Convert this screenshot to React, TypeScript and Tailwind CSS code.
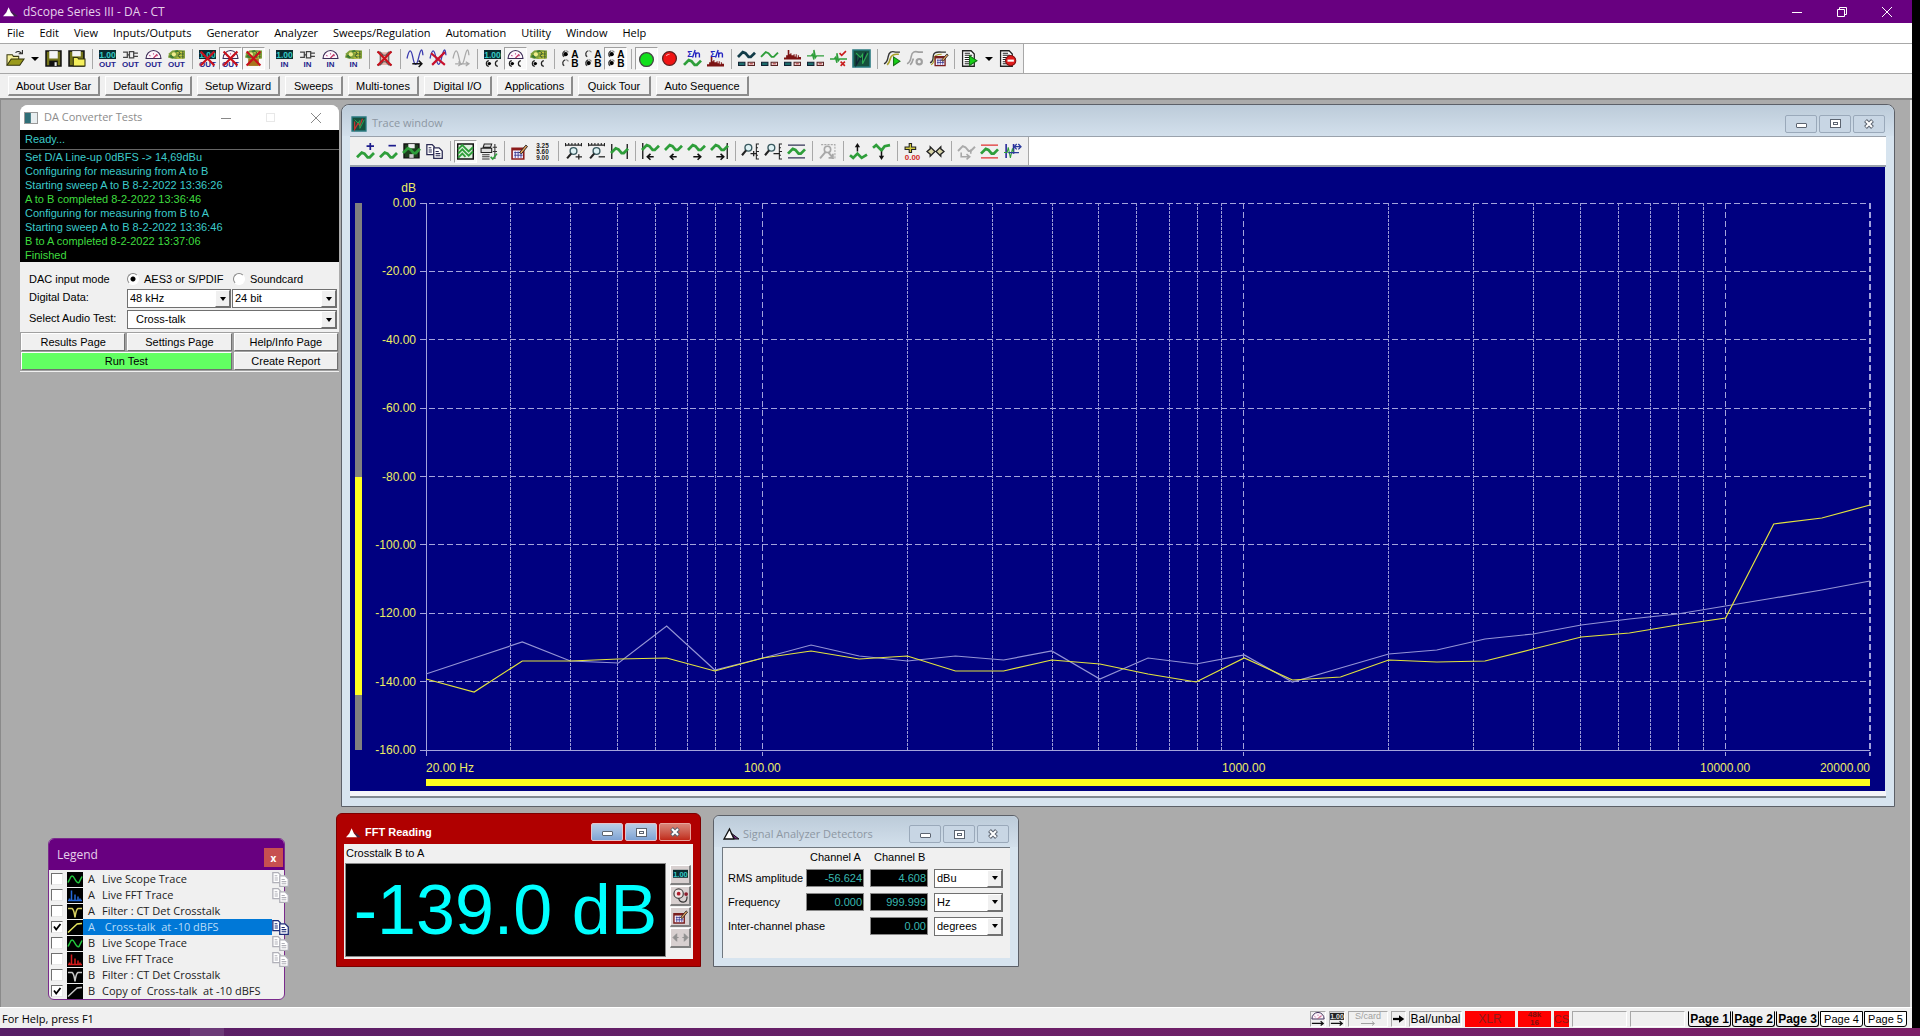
import type { ReactNode } from "react";
import clsx from "clsx";

/* ---------- icon parts, all on a 16 x 16 grid ---------- */

const GREEN = "#2e9e3a";

const Icon = ({ children, className = "size-[17px]" }: { children: ReactNode; className?: string }) => (
  <svg viewBox="0 0 16 16" className={clsx("shrink-0 overflow-visible", className)} fill="none" aria-hidden="true">
    {children}
  </svg>
);

const T = ({ x, y, s, fill, children }: { x: number; y: number; s: number; fill: string; children: string }) => (
  <text x={x} y={y} fontSize={s} fill={fill} fontWeight="bold" textAnchor="middle" fontFamily="Liberation Sans, sans-serif">
    {children}
  </text>
);

const Display = () => (
  <>
    <rect x="0" y="0" width="16" height="8.5" fill="#0a2a2e" />
    <T x={8} y={7.2} s={8} fill="#35c9c4">1.00</T>
  </>
);
const Plug = () => (
  <path d="M1 2h4v5H1M5 4.5h2M7 1.5h4v6H7zM11 3h4M11 6h4" stroke="#444" strokeWidth="1.2" />
);
const Dial = () => (
  <>
    <path d="M1 8a7 7.5 0 0 1 14 0z" fill="#fdf6fb" stroke="#3a2a55" strokeWidth="1.1" />
    <path d="M4 5l1.2.8M8 3v1.2M12 5l-1.2.8" stroke="#c0478c" />
    <path d="M8 7.5L11.5 4" stroke="#c0305c" strokeWidth="1.1" />
  </>
);
const Gears = () => (
  <>
    <path d="M0 7l1-4 3-2.500L9 0l7 .500V8l-8 .500-5-.500z" fill="#7fa03a" />
    <path d="M6 1l3-1 1 2-2 1zM1 6l2-2 3 3-2 1z" fill="#3c7a34" />
    <circle cx="5.500" cy="4" r="2" fill="#f0ec8c" />
    <path d="M8 2.500h7M9 5h6M8 7.500h7" stroke="#e3d442" strokeWidth=".800" />
    <path d="M10 1.500l1.500 2-2 1.500 2 2.500M14 1v7" stroke="#2d4a2a" strokeWidth=".900" />
  </>
);
const Out = () => <T x={8} y={15.800} s={7.500} fill="#24248c">OUT</T>;
const In = () => <T x={8} y={15.800} s={7.500} fill="#24248c">IN</T>;
const RedX = () => <path d="M1.5 1.5l13 13M14.5 1.5l-13 13" stroke="#c8101c" strokeWidth="2" />;
const Radios = () => (
  <>
    <path d="M4.500 10a2.800 2.800 0 0 0 0 5.500M13 10a2.800 2.800 0 0 0 0 5.500" stroke="#222" strokeWidth="1.200" />
    <circle cx="5" cy="12.800" r="1.600" fill="#000" />
  </>
);
const AB = ({ a, b }: { a?: boolean; b?: boolean }) => (
  <Icon>
    <path d="M4 .700a3.200 3.200 0 0 0-1 5.700M4 9.200a3.200 3.200 0 0 0-1 5.700" stroke="#333" strokeWidth="1.200" />
    <path d="M4.500.700a3 3 0 0 1 2.500 1.500M4.500 9.200a3 3 0 0 1 2.500 1.500" stroke="#777" />
    {a && <circle cx="4.400" cy="3.900" r="2" fill="#000" />}
    {b && <circle cx="4.400" cy="12.300" r="2" fill="#000" />}
    <T x={13} y={7.300} s={9.500} fill="#000">A</T>
    <T x={13} y={15.800} s={9.500} fill="#000">B</T>
  </Icon>
);
const Wave = ({ y = 0, c = GREEN, w = 2.6 }: { y?: number; c?: string; w?: number }) => (
  <path d="M0 9.500L4.500 5L7 6L10 9.500L12 9.500L16 5.500" transform={`translate(0 ${y})`} stroke={c} strokeWidth={w} />
);
const Boxes = () => (
  <>
    <path d="M.5 11.5h6v3h-6z" fill="#1b6b6b" stroke="#123" />
    <path d="M9.5 11.5h6v3h-6z" fill="#f3dede" stroke="#522" />
    <path d="M11 13h3" stroke="#a33" />
  </>
);
const Spikes = ({ c = "#7c1414", y = 0 }: { c?: string; y?: number }) => (
  <path d="M0 9h16V6.500h-2V5h-1v2h-1V4h-1v2h-1V4H9v1H8V5H7V3H6v1H5V0H3.500v5H2v2H0z" transform={`translate(0 ${y})`} fill={c} />
);
const Blip = () => <path d="M0 5.500h4l1-1.500 1.500 5V0l1.500 7 1-1.500h7" stroke={GREEN} strokeWidth="1.3" />;
const Sigma = () => (
  <>
    <T x={5.5} y={6.5} s={8} fill="#2424c0">Σ</T>
    <path d="M10.500 0L8 7M11 2v5M11 4q3-2.500 3.500 0v3" stroke="#2424c0" strokeWidth="1.300" />
  </>
);
const Sheet = () => (
  <>
    <path d="M1.500.7h8l3 3v11.600h-11z" fill="#fff" stroke="#222" strokeWidth="1.2" />
    <path d="M3.500 3h5M3.500 5h7M3.500 7h4M3.500 9h4M3.500 11h4M3.500 13h6" stroke="#222" />
  </>
);
const Grid = ({ c = "#7a1f1f" }: { c?: string }) => (
  <>
    <path d="M1 5h11v10H1z" fill="#f6f0ff" stroke={c} strokeWidth="1.5" />
    <path d="M1 6h11" stroke={c} strokeWidth="2" />
    <path d="M3 9h8M3 11.500h8M4 8v6M6.700 8v6M9.400 8v6" stroke="#33338c" strokeWidth=".8" />
    <path d="M8 9l6-7 1.500 1.300L10 10z" fill="#e5a05c" stroke="#222" strokeWidth=".9" />
  </>
);
const Copy = ({ c = "#2a2a52" }: { c?: string }) => (
  <Icon>
    <path d="M.8 1.500h5l2 2v7.500h-7z" fill="#fff" stroke={c} strokeWidth="1.2" />
    <path d="M7.300 4.500h5l3 3v7h-8z" fill="#fff" stroke={c} strokeWidth="1.2" />
    <path d="M2.500 4.500h2.500M2.500 6.500h3M2.500 8.500h3M9 8h3M9 10h4.500M9 12h4.500" stroke={c} />
  </Icon>
);
const Lens = ({ sign }: { sign: "+" | "-" }) => (
  <>
    <circle cx="8" cy="7.500" r="3.200" fill="#dff2f4" stroke="#3a5a60" strokeWidth="1.300" />
    <path d="M5.800 10L2 14.500" stroke="#222" strokeWidth="2" />
    <path d={sign === "+" ? "M10 13h6M13 10.500v5" : "M10 13h6"} stroke="#222" strokeWidth="1.200" />
  </>
);
const Arrow = ({ left }: { left?: boolean }) =>
  left ? (
    <path d="M11 13H5M8 10.200L5 13l3 2.800" stroke="#111" strokeWidth="1.500" />
  ) : (
    <path d="M5 13h7M9 10.200l3 2.800-3 2.800" stroke="#111" strokeWidth="1.500" />
  );
const Scope = ({ c = "#d03030" }: { c?: string }) => (
  <>
    <path d="M0 0h16v16H0z" fill="#16503c" />
    <path d="M0 0h16v16H0z" stroke="#2a7a80" strokeWidth="1.500" />
    <path d="M3 5v9l4-7 2 3 3-8" stroke={c} strokeWidth="1.300" />
    <path d="M3 3l4 4 2-3v9l5-10" stroke="#2fae55" />
  </>
);
const Sail = ({ dark }: { dark?: boolean }) => (
  <Icon className={dark ? "size-4" : "size-[15px]"}>
    <path d={dark ? "M1 13L6.500 3L11 13z" : "M0 13L3.500 9L6 3.500L8.500 9L12 13z"} fill="#fff" stroke={dark ? "#111" : "none"} strokeWidth="1.300" />
    <path d="M8 7l8 6h-4z" fill={dark ? "#7c2a8c" : "#3c2a48"} stroke={dark ? "#111" : "none"} />
  </Icon>
);

/* ---------- toolbars ---------- */

type Item = { label: string; icon: ReactNode; pressed?: boolean } | "sep" | "arrow";

const mainTools: Item[] = [
  {
    label: "Open",
    icon: (
      <Icon>
        <path d="M0 14V4.500h5l1 1.500h5v3" fill="#f5ef9c" stroke="#3c3c12" />
        <path d="M0 14.300L4 8.500h12L12 14.300z" fill="#9a9a1c" stroke="#33330c" />
        <path d="M8 2.500q3-2.500 5.500.5M14.500 0v3.500H11" stroke="#222" />
      </Icon>
    ),
  },
  "arrow",
  {
    label: "Save",
    icon: (
      <Icon>
        <path d="M1 1h14v14H1z" fill="#74741a" stroke="#111" strokeWidth="1.500" />
        <path d="M4 1h8v7H4z" fill="#f4f4f4" />
        <path d="M4 10h8v5H4z" fill="#111" />
        <path d="M9 11.500h2V15H9z" fill="#eee" />
      </Icon>
    ),
  },
  {
    label: "Save all",
    icon: (
      <Icon>
        <path d="M1 1h14v14H1z" fill="#74741a" stroke="#111" strokeWidth="1.500" />
        <path d="M4 1h8v5H4z" fill="#f4f4f4" />
        <path d="M5 15V7h4l1 1.500h6V15z" fill="#f5ef5c" stroke="#33330c" />
      </Icon>
    ),
  },
  "sep",
  { label: "Digital outputs", icon: <Icon><Display /><Out /></Icon> },
  { label: "Analogue outputs", icon: <Icon><Plug /><Out /></Icon> },
  { label: "Monitor outputs", icon: <Icon><Dial /><Out /></Icon> },
  { label: "Sound outputs", icon: <Icon><Gears /><Out /></Icon> },
  "sep",
  { label: "Mute digital", icon: <Icon><Display /><Out /><RedX /></Icon> },
  { label: "Mute analogue", pressed: true, icon: <Icon><Dial /><Out /><RedX /></Icon> },
  { label: "Mute sound", pressed: true, icon: <Icon><Gears /><path d="M3 8h10v7H3z" fill="#a8741c" /><RedX /></Icon> },
  "sep",
  { label: "Digital inputs", icon: <Icon><Display /><In /></Icon> },
  { label: "Analogue inputs", icon: <Icon><Plug /><In /></Icon> },
  { label: "Monitor inputs", icon: <Icon><Dial /><In /></Icon> },
  { label: "Sound inputs", icon: <Icon><Gears /><In /></Icon> },
  "sep",
  {
    label: "Disconnect",
    icon: (
      <Icon>
        <path d="M1 2h3l3 3h2l3-3h3M1 14h3l3-3h2l3 3h3M4 5h8v6H4z" fill="#e8b0a8" stroke="#555" />
        <RedX />
      </Icon>
    ),
  },
  "sep",
  {
    label: "Start generator",
    icon: <Icon><path d="M0 8q3-14 5.500-1t5.500 0T15 5" stroke="#3a3aae" strokeWidth="1.200" /><path d="M5 13h9M11 10l3 3-3 3" stroke="#111" strokeWidth="1.400" /></Icon>,
  },
  {
    label: "Stop generator",
    icon: <Icon><path d="M0 8q3-14 5.500-1t5.500 0T15 5" stroke="#3a3aae" strokeWidth="1.200" /><path d="M1 3l13 11M14 2L2 14" stroke="#c8102c" strokeWidth="2" /></Icon>,
  },
  {
    label: "Step generator",
    icon: <Icon><path d="M0 8q3-14 5.500-1t5.500 0T15 5M2 13h5M5 11l3 2-3 2M9 13h5M12 11l3 2-3 2" stroke="#a8a8a8" strokeWidth="1.200" /></Icon>,
  },
  "sep",
  { label: "Reading", icon: <Icon><Display /><Radios /></Icon> },
  { label: "Meter", pressed: true, icon: <Icon><Dial /><Radios /></Icon> },
  { label: "Detector", icon: <Icon><Gears /><Radios /></Icon> },
  "sep",
  { label: "Channel A", icon: <AB a /> },
  { label: "Channel B", icon: <AB b /> },
  { label: "Both channels", pressed: true, icon: <AB a b /> },
  "sep",
  { label: "Run", pressed: true, icon: <Icon><circle cx="8" cy="9" r="6.500" fill="#12e01c" stroke="#444" strokeWidth="1.200" /></Icon> },
  { label: "Stop", icon: <Icon><circle cx="8" cy="8" r="6.500" fill="#f01414" stroke="#5a2020" strokeWidth="1.200" /><path d="M5 5.500q1-1.500 3-1.500" stroke="#faa" /></Icon> },
  { label: "Average scope", icon: <Icon><Sigma /><Wave y={4.500} /></Icon> },
  { label: "Average FFT", icon: <Icon><Sigma /><Spikes y={6.500} /></Icon> },
  "sep",
  { label: "Scope buffers", icon: <Icon><Wave y={-3} c="#123c48" /><Boxes /></Icon> },
  { label: "Scope trace", icon: <Icon><Wave y={-3} w={1.800} /><Boxes /></Icon> },
  { label: "FFT trace", icon: <Icon><Spikes /><Boxes /></Icon> },
  { label: "Impulse", icon: <Icon><Blip /><Boxes /></Icon> },
  {
    label: "Impulse check",
    icon: <Icon><g transform="translate(0 3)"><Blip /></g><path d="M9 3l2 2 4-4M10 11l4 4M14 11l-4 4" stroke="#c81c1c" strokeWidth="1.500" /></Icon>,
  },
  { label: "Trace window", icon: <Icon><Scope c="#123" /></Icon> },
  "sep",
  {
    label: "Run sweep",
    icon: <Icon><path d="M0 13q3-1 4-7t7-4h4" stroke="#333" strokeWidth="1.300" /><path d="M3 14q2-2 3-6t6-4h2" stroke="#a8a028" strokeWidth="1.500" /><path d="M9 6.500v8l6-4z" fill="#18d018" stroke="#157015" /></Icon>,
  },
  {
    label: "Sweep options",
    icon: <Icon><path d="M0 13q3-1 4-7t7-4h4M3 14q2-2 3-6" stroke="#a0a0a0" strokeWidth="1.500" /><circle cx="11.500" cy="11" r="2.500" stroke="#a0a0a0" strokeWidth="2" /></Icon>,
  },
  {
    label: "Sweep table",
    icon: <Icon><path d="M0 12q3-1 3-6t8-4h4" stroke="#333" strokeWidth="1.300" /><path d="M1 14q3-2 3-6t7-4" stroke="#a8a028" /><g transform="translate(4 2) scale(.85)"><Grid /></g></Icon>,
  },
  "sep",
  { label: "Run script", icon: <Icon><Sheet /><path d="M8 5.500v9l7-4.500z" fill="#18d018" stroke="#157015" /></Icon> },
  "arrow",
  {
    label: "Stop script",
    icon: <Icon><Sheet /><circle cx="11" cy="10" r="4.800" fill="#e01c1c" stroke="#801010" /><path d="M8 10h6" stroke="#fff" strokeWidth="2" /></Icon>,
  },
];

const traceTools: Item[] = [
  { label: "Add trace", icon: <Icon><Wave y={4} /><path d="M9 3h7M12.500 0v6.500" stroke="#1c1c8c" strokeWidth="1.600" /></Icon> },
  { label: "Remove trace", icon: <Icon><Wave y={4} /><path d="M8 2.500h7" stroke="#1c1c8c" strokeWidth="1.600" /></Icon> },
  {
    label: "Save trace",
    icon: <Icon><path d="M1 1h14v13H1z" fill="#1d3d1d" stroke="#111" strokeWidth="1.400" /><path d="M5 1h6v4H5z" fill="#eee" /><Wave /><path d="M6 10.500h4V14H6z" fill="#ccc" /></Icon>,
  },
  { label: "Copy trace", icon: <Copy /> },
  "sep",
  {
    label: "Graph",
    pressed: true,
    icon: <Icon><path d="M.700 1h14.600v14H.700z" fill="#dff0df" stroke="#111" strokeWidth="1.400" /><path d="M1 6l4-4 3 3 3 3 4-4M1 10l4-4 3 3 3 3 4-4M1 14l4-4 3 3" stroke={GREEN} strokeWidth="1.800" /></Icon>,
  },
  {
    label: "Print",
    icon: <Icon><path d="M4 1h7l-1 3H3zM1 5h10v4H1z" fill="#ddd" stroke="#222" /><path d="M2 11h7M2 13h7M2 15h7M12 4h4M12 8h4M14 1v14" stroke="#333" /><path d="M10 13l2 2 4-5" stroke={GREEN} strokeWidth="1.500" /></Icon>,
  },
  "sep",
  { label: "Edit table", icon: <Icon><Grid c="#8c1c1c" /></Icon> },
  {
    label: "Readout",
    icon: <Icon><T x={8} y={4.800} s={6} fill="#222">3.25</T><T x={8} y={10.200} s={6} fill="#222">5.60</T><T x={8} y={15.600} s={6} fill="#222">9.00</T></Icon>,
  },
  "sep",
  { label: "Zoom in X", icon: <Icon><path d="M0 2h16M.500 0v3M3.500 0v2M6.500 0v2M9.500 0v2M12.500 0v2M15.500 0v3" stroke="#222" /><Lens sign="+" /></Icon> },
  { label: "Zoom out X", icon: <Icon><path d="M0 2h16M.500 0v3M3.500 0v2M6.500 0v2M9.500 0v2M12.500 0v2M15.500 0v3" stroke="#222" /><Lens sign="-" /></Icon> },
  { label: "Fit X", icon: <Icon><path d="M.700 1v14M15.300 1v14" stroke="#222" strokeWidth="1.300" /><Wave /></Icon> },
  "sep",
  { label: "Scroll to start", icon: <Icon><path d="M.700 0v15" stroke="#222" strokeWidth="1.300" /><Wave y={-3} /><Arrow left /></Icon> },
  { label: "Scroll left", icon: <Icon><Wave y={-3} /><Arrow left /></Icon> },
  { label: "Scroll right", icon: <Icon><Wave y={-3} /><Arrow /></Icon> },
  { label: "Scroll to end", icon: <Icon><path d="M15.300 0v15" stroke="#222" strokeWidth="1.300" /><Wave y={-3} /><Arrow /></Icon> },
  "sep",
  { label: "Zoom in Y", icon: <Icon><g transform="translate(-2 -3)"><Lens sign="+" /></g><path d="M13.500 1v14M13 1h3M13 4.500h2M13 8h3M13 11.500h2M13 15h3" stroke="#222" /></Icon> },
  { label: "Zoom out Y", icon: <Icon><g transform="translate(-2 -3)"><Lens sign="-" /></g><path d="M13.500 1v14M13 1h3M13 4.500h2M13 8h3M13 11.500h2M13 15h3" stroke="#222" /></Icon> },
  { label: "Fit Y", icon: <Icon><path d="M0 2h16M0 14h16" stroke="#335" strokeWidth="1.400" /><Wave y={.500} /></Icon> },
  "sep",
  { label: "Undo zoom", icon: <Icon><path d="M2 1.500h13v13h-3" stroke="#aaa" strokeDasharray="2 1" /><circle cx="8" cy="6" r="3" stroke="#a8a8a8" strokeWidth="1.500" /><path d="M6 8.500l-5 6M9 9l4 5M13 10v4H9" stroke="#a8a8a8" strokeWidth="1.800" /></Icon> },
  "sep",
  { label: "Move up", icon: <Icon><path d="M0 11.500L3 14l4-4 4 4 5-3" stroke={GREEN} strokeWidth="2.600" /><path d="M7 8V2" stroke="#111" strokeWidth="1.400" /><path d="M4.500 4L7 0l2.500 4z" fill="#111" /></Icon> },
  { label: "Move down", icon: <Icon><path d="M0 4.500L3 2l5 5 3-4 5-1" stroke={GREEN} strokeWidth="2.600" /><path d="M8 8v6" stroke="#111" strokeWidth="1.400" /><path d="M5.500 12L8 16l2.500-4z" fill="#111" /></Icon> },
  "sep",
  { label: "Cursor", icon: <Icon><path d="M6 0v9.500M.500 5h11" stroke="#222" strokeWidth="3.200" /><path d="M6 1v7.500M1.500 5h9" stroke="#d0c840" strokeWidth="1.300" /><T x={8} y={15.800} s={7.500} fill="#d02828">0.00</T></Icon> },
  { label: "Centre cursor", icon: <Icon><path d="M0 8l3-2.500v-2L7.500 8 3 12.500v-2zM16 8l-3-2.500v-2L8.500 8l4.500 4.500v-2z" fill="#d8d4a8" stroke="#222" strokeWidth="1.200" /></Icon> },
  "sep",
  { label: "Regulate", icon: <Icon><Wave y={-2} c="#aaa" w={1.800} /><path d="M3 9v4h7M8 10.500l3 2.500-3 2.500M12 6v4" stroke="#a8a8a8" strokeWidth="1.500" /></Icon> },
  { label: "Limits", icon: <Icon><path d="M0 2h16M0 14h16" stroke="#e03030" strokeWidth="1.300" /><Wave y={.500} /></Icon> },
  { label: "Markers", icon: <Icon><path d="M2 1v13M9 1v9" stroke="#2a2a9c" strokeWidth="1.500" /><path d="M0 9h3l1-5 2 10 2-9 1 4h5" stroke={GREEN} /><path d="M10 3.500h6M12 1l-2.500 2.500L12 6M13.500 1L16 3.500 13.500 6M4 9h10" stroke="#2a3a9c" strokeWidth="1.200" /></Icon> },
];

const Toolbar = ({ items }: { items: Item[] }) => (
  <div className="flex h-full w-max items-center border-r border-[#a8a8a8] bg-[#f0f0f0] px-1">
    {items.map((item, i) => {
      if (item === "sep")
        return (
          <span key={i} className="flex h-5 w-2 justify-center">
            <span className="w-px bg-[#a8a8a8]" />
          </span>
        );
      if (item === "arrow")
        return (
          <button key={i} aria-label="More" className="flex w-[15px] justify-center">
            <span className="border-x-4 border-t-4 border-x-transparent border-t-black" />
          </button>
        );
      return (
        <button
          key={i}
          aria-label={item.label}
          className={clsx(
            "flex h-[23px] w-[23px] items-center justify-center",
            item.pressed && "border border-t-[#a0a0a0] border-r-white border-b-white border-l-[#a0a0a0] bg-[#f9f9f9]",
          )}
        >
          {item.icon}
        </button>
      );
    })}
  </div>
);

/* ---------- shared controls ---------- */

const Combo = ({ id, label, options, className, pad = "pl-[2px]" }: { id: string; label: string; options: string[]; className?: string; pad?: string }) => (
  <span className={clsx("relative block h-[19px] border border-[#707070] bg-white", className)}>
    <select id={id} aria-label={label} className={clsx("block h-full w-full appearance-none bg-transparent text-[11px] leading-[17px] outline-none", pad)}>
      {options.map((o) => (
        <option key={o}>{o}</option>
      ))}
    </select>
    <span className="pointer-events-none absolute inset-y-0 right-0 flex w-[15px] items-center justify-center border border-t-white border-r-[#707070] border-b-[#707070] border-l-white bg-[#f0f0f0]">
      <span className="border-x-[3px] border-t-4 border-x-transparent border-t-black" />
    </span>
  </span>
);

const WinButtons = ({ active }: { active?: boolean }) => {
  const box = clsx(
    "flex h-[18px] w-8 items-center justify-center rounded-[2px] border",
    active ? "border-[#e4c4cc] bg-linear-to-b from-[#b9cde4] via-[#9dbade] via-50% to-[#7fa3d4]" : "border-[#9aa9ba] bg-[#c8d6e4]",
  );
  return (
    <span className="flex gap-[2px]">
      <button aria-label="Minimize" className={box}>
        <span className="mt-[3px] h-[5px] w-[11px] rounded-[1px] border border-[#5c6470] bg-white" />
      </button>
      <button aria-label="Maximize" className={box}>
        <span className="flex h-[9px] w-[11px] items-center justify-center border border-[#5c6470] bg-white">
          <span className="h-[3px] w-[5px] border border-[#5c6470]" />
        </span>
      </button>
      <button
        aria-label="Close"
        className={clsx("flex h-[18px] w-8 items-center justify-center rounded-[2px] border", active ? "border-[#e8a49c] bg-linear-to-b from-[#d88478] to-[#c02818]" : "border-[#9aa9ba] bg-[#c8d6e4]")}
      >
        <svg viewBox="0 0 12 10" className="h-[10px] w-3" aria-hidden="true">
          <path d="M2.500 1.500l7 7M9.500 1.500l-7 7" stroke="#5c6470" strokeWidth="4" />
          <path d="M3 2l6 6M9 2L3 8" stroke="#fff" strokeWidth="2" />
        </svg>
      </button>
    </span>
  );
};

/* ---------- main bars ---------- */

const menus = ["File", "Edit", "View", "Inputs/Outputs", "Generator", "Analyzer", "Sweeps/Regulation", "Automation", "Utility", "Window", "Help"];

const userButtons = [
  ["About User Bar", "w-[92px]"],
  ["Default Config", "w-[87px]"],
  ["Setup Wizard", "w-[83px]"],
  ["Sweeps", "w-[58px]"],
  ["Multi-tones", "w-[71px]"],
  ["Digital I/O", "w-[68px]"],
  ["Applications", "w-[76px]"],
  ["Quick Tour", "w-[73px]"],
  ["Auto Sequence", "w-[93px]"],
];

const TitleBar = () => (
  <header className="flex h-[23px] items-center bg-[#680080] pl-[3px] text-[#e6d0ea]">
    <Sail />
    <h1 className="ml-[5px] flex-1 font-['Open_Sans',sans-serif] text-[12px]">dScope Series III - DA - CT</h1>
    <div className="flex">
      <button aria-label="Minimize" className="flex w-[45px] justify-center">
        <svg viewBox="0 0 10 10" className="size-[10px]"><path d="M0 5.500h10" stroke="#fff" /></svg>
      </button>
      <button aria-label="Restore" className="flex w-[45px] justify-center">
        <svg viewBox="0 0 10 10" className="size-[10px]" fill="none" stroke="#fff"><path d="M.500 2.500h7v7h-7zM2.500 2.500v-2h7v7h-2" /></svg>
      </button>
      <button aria-label="Close" className="flex w-12 justify-center pr-[2px]">
        <svg viewBox="0 0 10 10" className="size-[10px]"><path d="M0 0l10 10M10 0L0 10" stroke="#fff" /></svg>
      </button>
    </div>
  </header>
);

const MenuBar = () => (
  <nav className="flex h-[21px] items-center gap-[15px] border-b border-[#a8a8a8] bg-white pl-[7px] font-['Open_Sans',sans-serif] text-[11px]">
    {menus.map((m) => (
      <button key={m}>{m}</button>
    ))}
  </nav>
);

const UserBar = () => (
  <div className="flex h-[26px] items-end gap-[5px] border-b-2 border-[#8a8a8a] bg-[#f0f0f0] pb-[2px] pl-2">
    {userButtons.map(([name, width]) => (
      <button key={name} className={clsx("h-5 border border-t-white border-r-2 border-r-[#8c8c8c] border-b-2 border-b-[#8c8c8c] border-l-white text-[11px] leading-4 whitespace-nowrap", width)}>
        {name}
      </button>
    ))}
  </div>
);

/* ---------- DA Converter Tests ---------- */

const log = [
  ["Set D/A Line-up 0dBFS -> 14,69dBu", false],
  ["Configuring for measuring from A to B", false],
  ["Starting sweep A to B 8-2-2022 13:36:26", false],
  ["A to B completed 8-2-2022 13:36:46", true],
  ["Configuring for measuring from B to A", false],
  ["Starting sweep A to B 8-2-2022 13:36:46", false],
  ["B to A completed 8-2-2022 13:37:06", true],
  ["Finished", true],
] as const;

const PushButton = ({ children, className }: { children: string; className?: string }) => (
  <button className={clsx("h-[18px] border border-t-white border-r-[#707070] border-b-[#707070] border-l-white text-[11px] leading-4 outline outline-[#a0a0a0]", className)}>
    {children}
  </button>
);

const ConverterWindow = () => (
  <section className="absolute top-[5px] left-[20px] w-[319px] rounded-t-lg bg-[#f0f0f0]">
    <div className="flex h-[25px] items-center rounded-t-lg bg-white pl-1 text-[#8c8c8c]">
      <span className="h-3 w-[14px] border border-[#999] bg-linear-to-r from-[#2f6f78] from-45% to-[#e8eef0] to-50%" />
      <h2 className="ml-[6px] flex-1 font-['Open_Sans',sans-serif] text-[11px]">DA Converter Tests</h2>
      <button aria-label="Minimize" className="flex w-[45px] justify-center">
        <svg viewBox="0 0 10 10" className="size-[10px]"><path d="M0 5.500h10" stroke="#888" /></svg>
      </button>
      <button aria-label="Maximize" className="flex w-[45px] justify-center">
        <span className="size-[9px] border border-[#e8e8e8]" />
      </button>
      <button aria-label="Close" className="flex w-[46px] justify-center">
        <svg viewBox="0 0 10 10" className="size-[10px]"><path d="M0 0l10 10M10 0L0 10" stroke="#888" /></svg>
      </button>
    </div>
    <div className="bg-black text-[11px] leading-[14px] text-[#3ccaca]">
      <p className="h-5 border-b border-[#666] px-[5px] pt-[2px]">Ready...</p>
      <div className="h-[112px] px-[5px] whitespace-nowrap">
        {log.map(([line, done], i) => (
          <p key={i} className={clsx(done && "text-[#3fdc3f]")}>{line}</p>
        ))}
      </div>
    </div>
    <form className="px-px pt-[9px] pb-[2px] text-[11px]" onSubmit={(e) => e.preventDefault()}>
      <div className="grid grid-cols-[105px_104px_106px] gap-y-[2px] pl-px">
        <span className="pl-[7px] leading-4">DAC input mode</span>
        <label className="flex items-center gap-[5px] leading-4 whitespace-nowrap">
          <input type="radio" name="dac" defaultChecked className="size-3 appearance-none rounded-full border border-[#888] border-r-white border-b-white bg-white bg-[radial-gradient(circle,#000_2px,transparent_3px)]" />
          AES3 or S/PDIF
        </label>
        <label className="flex items-center gap-[5px] pl-[2px] leading-4">
          <input type="radio" name="dac" className="size-3 appearance-none rounded-full border border-[#888] border-r-white border-b-white bg-white" />
          Soundcard
        </label>
        <label htmlFor="rate" className="pl-[7px] leading-4">Digital Data:</label>
        <Combo id="rate" label="Sample rate" options={["48 kHz"]} />
        <Combo id="bits" label="Word length" options={["24 bit"]} className="ml-px" />
        <label htmlFor="test" className="pl-[7px] leading-4 whitespace-nowrap">Select Audio Test:</label>
        <Combo id="test" label="Select Audio Test" options={["Cross-talk"]} className="col-span-2" pad="pl-[8px]" />
      </div>
      <div className="mt-1 grid grid-cols-3 gap-x-[2px] gap-y-px">
        <PushButton>Results Page</PushButton>
        <PushButton>Settings Page</PushButton>
        <PushButton>Help/Info Page</PushButton>
        <PushButton className="col-span-2 bg-[#62ff62]">Run Test</PushButton>
        <PushButton>Create Report</PushButton>
      </div>
    </form>
  </section>
);

/* ---------- Trace window ---------- */

const W = 1444;
const H = 547;

// y positions on the plot, one every tenth of a decade from 20 Hz
const traceA = [476, 489, 458, 458, 456, 455, 468, 455, 448, 456, 453, 468, 468, 457, 461, 471, 479, 455, 477, 474, 457, 459, 458, 446, 434, 430, 422, 415, 321, 315, 302];
const traceB = [471, 455, 439, 458, 460, 423, 467, 455, 442, 453, 458, 453, 457, 448, 476, 455, 461, 452, 479, 465, 451, 447, 436, 431, 422, 416, 411, 403, 395, 387, 378];

const points = (ys: number[]) => ys.map((y, i) => `${(i * W) / 30},${y}`).join(" ");
const freqX = (f: number) => (Math.log10(f / 20) / 3) * W;

const freqs: number[] = [];
for (let decade = 10; decade <= 10000; decade *= 10)
  for (let n = 1; n < 10; n++) if (n * decade > 20 && n * decade < 20000) freqs.push(n * decade);
const isDecade = (f: number) => f === 100 || f === 1000 || f === 10000;

const levels = ["0.00", "-20.00", "-40.00", "-60.00", "-80.00", "-100.00", "-120.00", "-140.00", "-160.00"];

const Plot = () => (
  <svg viewBox={`0 0 ${W} ${H}`} preserveAspectRatio="none" className="h-full w-full overflow-visible" fill="none">
    <g stroke="#a4a4dc" strokeWidth="1" shapeRendering="crispEdges">
      {levels.slice(0, -1).map((l, i) => (
        <path key={l} d={`M-6 ${(i * H) / 8}H${W}`} strokeDasharray="6 3" />
      ))}
      {freqs.map((f) => (
        <path
          key={f}
          d={`M${freqX(f)} 0V${isDecade(f) ? H + 6 : H}`}
          stroke={isDecade(f) ? "#a4a4dc" : "#9c9cd6"}
          strokeDasharray={isDecade(f) ? "6 3" : "3 1"}
        />
      ))}
      <path d={`M${W} 0V${H + 6}`} strokeDasharray="6 3" strokeWidth="2" />
      <path d={`M0 0V${H + 6}M-6 ${H}H${W}`} />
    </g>
    <polyline points={points(traceB)} stroke="#9494d4" strokeWidth="1.200" />
    <polyline points={points(traceA)} stroke="#e4e43c" strokeWidth="1.200" />
  </svg>
);

const TraceWindow = () => (
  <section className="absolute top-1 right-[17px] bottom-[200px] left-[341px] flex flex-col rounded-t-lg border border-[#5c6068] bg-[#d7e4ef] px-2 pb-2">
    <div className="-mx-2 flex h-[31px] items-center rounded-t-lg bg-linear-to-b from-[#bccbd9] to-[#d3e0ec] pt-[6px] pr-[9px] pl-[10px]">
      <Icon className="size-[14px]"><Scope /></Icon>
      <h2 className="ml-[6px] flex-1 font-['Open_Sans',sans-serif] text-[11px] text-[#8d97a3]">Trace window</h2>
      <WinButtons />
    </div>
    <div className="h-[31px] border-t border-b-2 border-[#9aa2ac] bg-white">
      <Toolbar items={traceTools} />
    </div>
    <div className="mr-px flex min-h-0 flex-1 flex-col bg-[#000080] pr-[15px] pb-[5px] text-[12px] text-[#ecec64]">
      <div className="flex h-9 w-[66px] items-end justify-end pb-[7px] leading-4">dB</div>
      <div className="flex min-h-0 flex-1">
        <div className="mr-[4px] ml-[5px] flex w-[7px] flex-col bg-[#808080]">
          <span className="mt-auto basis-[40%] bg-[#ffff20]" />
          <span className="basis-[10%]" />
        </div>
        <div className="mr-[10px] flex w-[50px] flex-col justify-between">
          {levels.map((l) => (
            <span key={l} className="flex h-0 items-center justify-end">{l}</span>
          ))}
        </div>
        <div className="min-w-0 flex-1">
          <Plot />
        </div>
      </div>
      <div className="relative ml-[76px] h-[29px] leading-9">
        <span className="absolute left-0">20.00 Hz</span>
        {[100, 1000, 10000].map((f) => (
          <span key={f} className="absolute -translate-x-1/2" style={{ left: `${(freqX(f) / W) * 100}%` }}>
            {f.toFixed(2)}
          </span>
        ))}
        <span className="absolute right-0">20000.00</span>
      </div>
      <div className="ml-[76px] h-[7px] bg-[#ffff20]" />
    </div>
    <div className="h-[7px] border-b-2 border-[#808890] bg-[#f4f4f8]" />
  </section>
);

/* ---------- Legend ---------- */

const Thumb = ({ d, c }: { d: string; c: string }) => (
  <svg viewBox="0 0 16 14" className="ml-1 h-[15px] w-4 shrink-0 bg-black" fill="none" aria-hidden="true">
    <path d={d} stroke={c} strokeWidth="1.500" />
  </svg>
);

const sine = "M1 10L3 6Q5 1 7.500 6T12 10L15 4";
const fft = "M1 12h14M4.500 12V2M8 12V6M11 12V8M2.500 12v-2M13 12v-2";
const notch = "M1 4h4q2 1 3 9q1-8 3-9h4";
const slope = "M1 12L10 3.500Q11 3 15 3";

const legend = [
  { ch: "A", name: "Live Scope Trace", d: sine, c: "#22c83c", copy: "#b0b0b8" },
  { ch: "A", name: "Live FFT Trace", d: fft, c: "#2468d8", copy: "#b0b0b8" },
  { ch: "A", name: "Filter : CT Det Crosstalk", d: notch, c: "#d8d060" },
  { ch: "A", name: " Cross-talk  at -10 dBFS", d: slope, c: "#e8e860", copy: "#1c2c78", on: true, active: true },
  { ch: "B", name: "Live Scope Trace", d: sine, c: "#22c83c", copy: "#b0b0b8" },
  { ch: "B", name: "Live FFT Trace", d: fft, c: "#d81c1c", copy: "#b0b0b8" },
  { ch: "B", name: "Filter : CT Det Crosstalk", d: notch, c: "#c8c8c8" },
  { ch: "B", name: "Copy of  Cross-talk  at -10 dBFS", d: slope, c: "#c8c8c8", on: true },
];

const Legend = () => (
  <section className="absolute bottom-[7px] left-[48px] w-[237px] rounded-md border border-[#7a2a8c] bg-[#f0f0f0] font-['Open_Sans',sans-serif] text-[11px]">
    <div className="flex h-[31px] items-center rounded-t-[5px] bg-[#680080] pr-px pl-2 text-[#e6d0ea]">
      <h2 className="flex-1 text-[12px]">Legend</h2>
      <button aria-label="Close" className="mb-[3px] h-[19px] w-[19px] self-end bg-[#c75050] text-[10px] leading-4 font-bold text-white">x</button>
    </div>
    <ul className="pt-px">
      {legend.map((row, i) => (
        <li key={i} className="flex h-4 items-center">
          <label className="flex h-4 flex-1 items-center">
            <input
              type="checkbox"
              defaultChecked={row.on}
              className="peer ml-[2px] size-3 shrink-0 appearance-none border border-t-[#707070] border-r-[#e8e8e8] border-b-[#e8e8e8] border-l-[#707070] bg-white"
            />
            <svg viewBox="0 0 12 12" className="-ml-3 hidden size-3 peer-checked:block" fill="none" aria-hidden="true">
              <path d="M3 5.500L5.200 8.500L9.500 3" stroke="#000" strokeWidth="1.800" />
            </svg>
            <Thumb d={row.d} c={row.c} />
            <span className={clsx("flex h-4 flex-1 items-center whitespace-pre", row.active ? "bg-[#0078d7] text-[#b8dcf8]" : "text-[#222]")}>
              <span className="w-[19px] pl-[5px]">{row.ch}</span>
              {row.name}
            </span>
          </label>
          <span className="flex w-3">{row.copy && <Copy c={row.copy} />}</span>
        </li>
      ))}
    </ul>
  </section>
);

/* ---------- FFT Reading ---------- */

const SideButton = ({ label, children }: { label: string; children: ReactNode }) => (
  <button aria-label={label} className="flex h-[20px] w-[21px] items-center justify-center border border-t-white border-r-2 border-r-[#808080] border-b-2 border-b-[#808080] border-l-white bg-[#d8d0d0]">
    <Icon className="size-[15px]">{children}</Icon>
  </button>
);

const FftReading = () => (
  <section className="absolute bottom-[40px] left-[336px] w-[365px] rounded-t-md border border-[#7c0000] bg-[#b00000] px-[7px] pb-[7px]">
    <div className="flex h-[30px] items-center pt-[6px] pr-[2px] pl-[2px]">
      <Sail />
      <h2 className="ml-1 flex-1 text-[11px] font-bold text-white">FFT Reading</h2>
      <WinButtons active />
    </div>
    <div className="bg-[#f0f0f0]">
      <p className="h-[19px] pl-[2px] text-[11px] leading-[19px]">Crosstalk B to A</p>
      <div className="flex justify-between pr-[2px] pb-[2px] pl-px">
        <output className="flex h-[94px] w-[321px] items-center justify-center border border-[#888] bg-black text-[70px] leading-none whitespace-nowrap text-[#00ffff]">
          -139.0 dB
        </output>
        <div className="flex flex-col gap-px pt-[2px]">
          <SideButton label="Reading"><g transform="translate(0 3)"><Display /></g></SideButton>
          <SideButton label="Alarm">
            <circle cx="6" cy="6" r="5" stroke="#444" strokeWidth="1.300" fill="#f0e4e4" />
            <circle cx="6" cy="6" r="2" fill="#b01c2c" />
            <path d="M6 11q1 4 5 4t4-6" stroke="#333" strokeWidth="1.300" />
            <circle cx="14" cy="6.500" r="2" fill="#8c1c2c" />
          </SideButton>
          <SideButton label="Table"><Grid /></SideButton>
          <SideButton label="Scroll"><path d="M0 8l4-4v8zM4 8h2M16 8l-4-4v8zM12 8h-2" fill="#909090" stroke="#909090" /></SideButton>
        </div>
      </div>
    </div>
  </section>
);

/* ---------- Signal Analyzer Detectors ---------- */

const detectors = [
  { name: "RMS amplitude", a: "-56.624", b: "4.608", unit: "dBu" },
  { name: "Frequency", a: "0.000", b: "999.999", unit: "Hz" },
  { name: "Inter-channel phase", b: "0.00", unit: "degrees" },
];

const Lcd = ({ children }: { children: string }) => (
  <span className="block h-[18px] w-[58px] border border-[#888] bg-black pr-px text-right leading-4 text-[#38b8b0]">{children}</span>
);

const Detectors = () => (
  <section className="absolute bottom-[40px] left-[713px] w-[306px] rounded-t-md border border-[#5c6068] bg-[#d7e4ef] px-2 pb-2">
    <div className="-mx-2 flex h-[31px] items-center rounded-t-md bg-linear-to-b from-[#bccbd9] to-[#d3e0ec] pt-[5px] pr-[9px] pl-[9px]">
      <Sail dark />
      <h2 className="ml-1 flex-1 font-['Open_Sans',sans-serif] text-[11px] text-[#8d97a3]">Signal Analyzer Detectors</h2>
      <WinButtons />
    </div>
    <div className="h-[111px] border-t border-l border-[#707880] bg-[#f0f0f0] pl-[5px] text-[11px]">
      <table className="border-collapse">
        <thead>
          <tr className="h-[18px]">
            <th className="w-[78px]" />
            <th className="w-16 text-left font-normal whitespace-nowrap"><span className="pl-1">Channel A</span></th>
            <th className="w-16 text-left font-normal whitespace-nowrap"><span className="pl-1">Channel B</span></th>
            <th />
          </tr>
        </thead>
        <tbody>
          {detectors.map((r) => (
            <tr key={r.name} className="h-6">
              <th scope="row" colSpan={r.a ? 1 : 2} className="text-left font-normal whitespace-nowrap">{r.name}</th>
              {r.a && <td><Lcd>{r.a}</Lcd></td>}
              <td><Lcd>{r.b}</Lcd></td>
              <td><Combo id={`unit-${r.unit}`} label={`${r.name} unit`} options={[r.unit]} className="w-[69px]" /></td>
            </tr>
          ))}
        </tbody>
      </table>
    </div>
  </section>
);

/* ---------- Status bar ---------- */

const pane = "flex h-4 items-center justify-center border border-t-[#a8a8a8] border-r-white border-b-white border-l-[#a8a8a8]";

const StatusBar = () => (
  <footer className="flex h-[21px] items-center border-t border-white bg-[#f0f0f0] pt-[2px] pr-[5px] text-[12px]">
    <p className="flex-1 pl-[2px] font-['Open_Sans',sans-serif] text-[11px]">For Help, press F1</p>
    <div className="flex items-center gap-[3px]">
      <span className={clsx(pane, "w-4")}><Icon className="size-[14px]"><Dial /><path d="M1 13h13M11 10.500l3 2.500-3 2.500" stroke="#111" strokeWidth="1.400" /></Icon></span>
      <span className={clsx(pane, "w-4")}><Icon className="size-[14px]"><rect y="1" width="16" height="8" fill="#222" /><T x={8} y={8} s={8} fill="#ddd">1.00</T><path d="M1 13h13M11 10.500l3 2.500-3 2.500" stroke="#111" strokeWidth="1.400" /></Icon></span>
      <span className={clsx(pane, "w-10 flex-col text-[9px] leading-[9px] text-[#a0a0a0]")}>
        S/card
        <svg viewBox="0 0 16 5" className="h-[5px] w-4" fill="none"><path d="M1 2.500h13M12 .500l2.500 2-2.500 2" stroke="#a0a0a0" /></svg>
      </span>
      <span className={clsx(pane, "w-[15px]")}><Icon className="size-[12px]"><path d="M0 8h9" stroke="#000" strokeWidth="3" /><path d="M8 3l7 5-7 5z" fill="#000" /></Icon></span>
      <span className={clsx(pane, "w-[53px]")}>Bal/unbal</span>
      <span className="flex h-4 w-[50px] items-center justify-center bg-[#ff0000] text-[#8c1c1c]">XLR</span>
      <span className="flex h-4 w-[33px] flex-col items-center justify-center bg-[#ff0000] text-[8px] leading-[8px] font-bold text-[#7c1010]">
        <span>48k</span>
        <span>16</span>
      </span>
      <span className="flex h-4 w-[15px] items-center justify-center bg-[#ff0000] text-[11px] text-[#8c1c1c]">CS</span>
      <span className={clsx(pane, "w-[55px]")} />
      <span className={clsx(pane, "w-[55px]")} />
    </div>
    <div className="ml-[3px] flex gap-px">
      {["Page 1", "Page 2", "Page 3", "Page 4", "Page 5"].map((p, i) => (
        <button key={p} className={clsx("h-4 w-[43px] rounded-b-[3px] border border-black leading-[14px] whitespace-nowrap", i < 3 ? "border-t-transparent font-bold" : "bg-white text-[11px]")}>
          {p}
        </button>
      ))}
    </div>
  </footer>
);

export default function App() {
  return (
    <div className="flex h-screen min-h-[720px] flex-col overflow-hidden bg-black pr-2 font-['Liberation_Sans',Arial,sans-serif] text-black">
      <TitleBar />
      <MenuBar />
      <div className="h-[30px] border-b border-[#a8a8a8] bg-white">
        <Toolbar items={mainTools} />
      </div>
      <UserBar />
      <main className="relative flex-1 bg-[#ababab] shadow-[inset_1px_0_0_#8a8a8a,inset_-2px_0_0_#e8e8e8]">
        <ConverterWindow />
        <TraceWindow />
        <Legend />
        <FftReading />
        <Detectors />
      </main>
      <StatusBar />
      <div className="-mr-2 flex h-2 bg-linear-to-r from-[#571e66] to-[#7c1f68]">
        <span className="ml-[190px] w-[34px] bg-[#6c3a78]" />
      </div>
    </div>
  );
}
